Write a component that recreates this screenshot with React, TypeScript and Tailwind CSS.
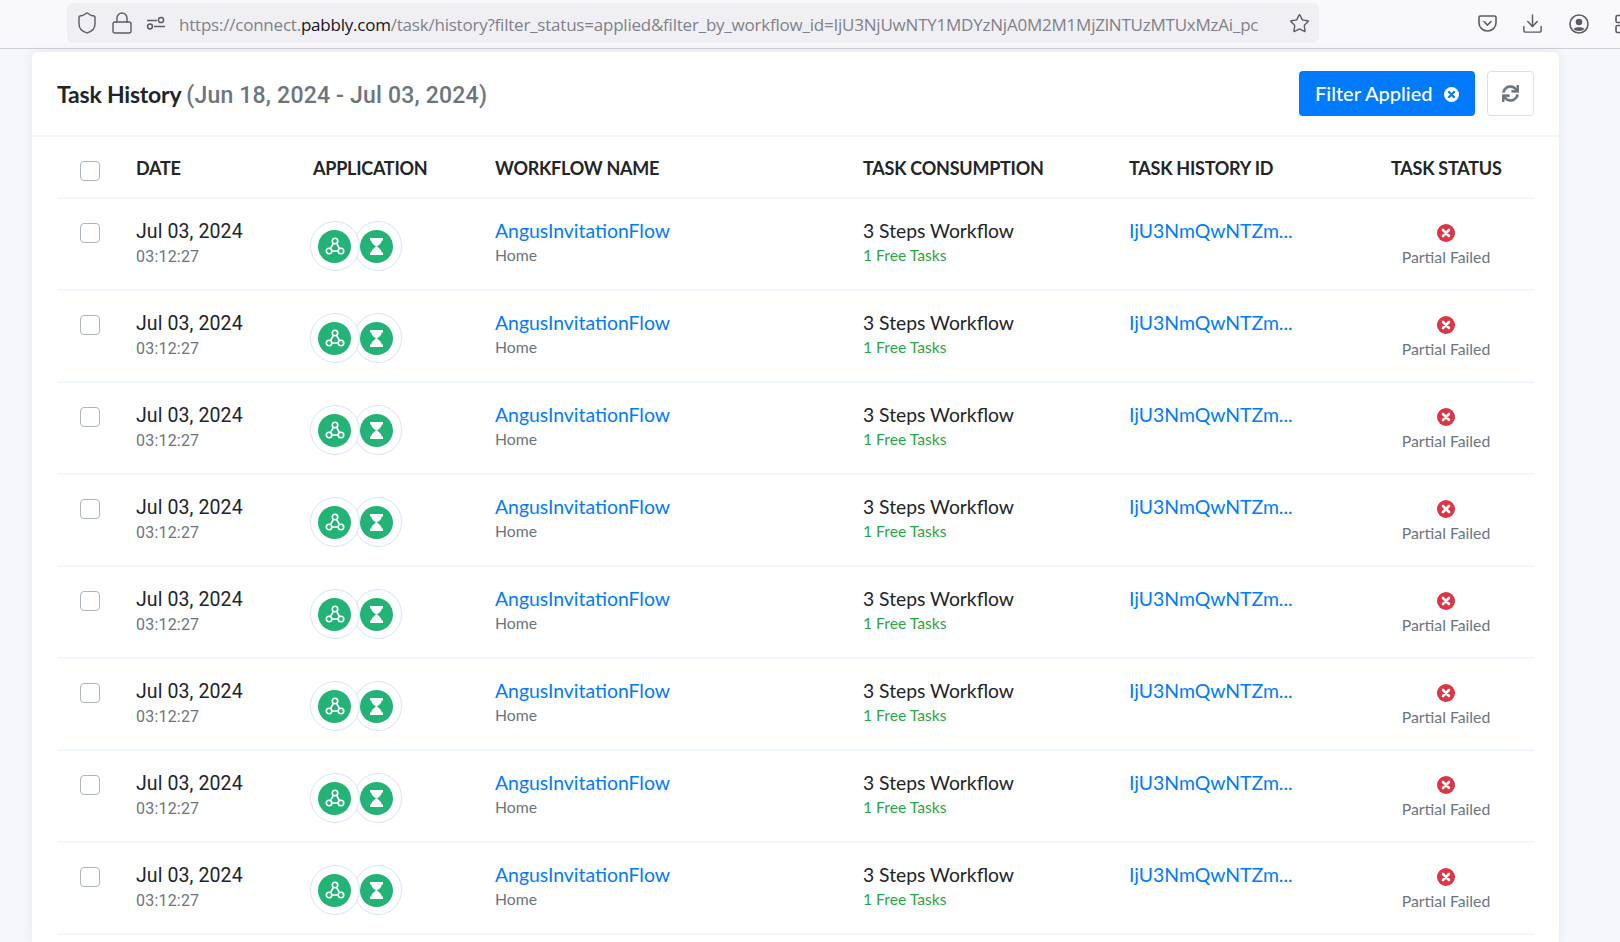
import { Shield, Lock, Star, Download } from "lucide-react";
import { FaSync } from "react-icons/fa";

const COLS = "grid grid-cols-[78px_174px_185px_368px_266px_262px_143px]";

function Check({ className = "" }: { className?: string }) {
  return <span className={`block w-[20px] h-[20px] ml-[22px] rounded-[4px] border border-[#adb5bd] bg-white ${className}`} />;
}

function Apps() {
  return (
    <div className="flex mt-[22px] h-[50px]">
      <div className="relative z-10 w-[50px] h-[50px] rounded-full border border-[#d6e2fb] bg-white flex items-center justify-center">
        <span className="w-[33px] h-[33px] mr-[1px] rounded-full bg-[#23b377] flex items-center justify-center">
          <svg width="22" height="22" viewBox="0 0 24 24" fill="none" stroke="white" strokeWidth="1.8" strokeLinecap="round" strokeLinejoin="round">
            <circle cx="12" cy="6.5" r="3" />
            <circle cx="5.5" cy="17.5" r="3" />
            <circle cx="18.5" cy="17.5" r="3" />
            <path d="M10.4 9L7 14.9" />
            <path d="M13.6 9L17 14.9" />
            <path d="M8.5 17.5H15.5" />
          </svg>
        </span>
      </div>
      <div className="w-[48px] h-[50px] -ml-[6px] rounded-full border border-[#d6e2fb] flex items-center justify-center">
        <span className="w-[33px] h-[33px] mr-[3px] rounded-full bg-[#23b377] flex items-center justify-center">
          <svg width="15" height="17" viewBox="0 0 15 17" fill="white">
            <path d="M1 0H14V2.5H12.8C12.8 5 10 7 8 8.5H7C5 7 2.2 5 2.2 2.5H1Z" />
            <path d="M1 17H14V14.5H12.8C12.8 12 10 10 8 8.5H7C5 10 2.2 12 2.2 14.5H1Z" />
          </svg>
        </span>
      </div>
    </div>
  );
}

function Row() {
  return (
    <div className={`${COLS} h-[92px] border-b-2 border-[#f0f6fd]`}>
      <div className="pt-[24px]"><Check /></div>
      <div className="pt-[20px] font-['Roboto',sans-serif]">
        <div className="text-[19.5px] leading-[25px] text-[#212529] tracking-[0.1px]">Jul 03, 2024</div>
        <div className="text-[16px] leading-[26px] text-[#6c757d] tracking-[0.2px]">03:12:27</div>
      </div>
      <Apps />
      <div className="pt-[20px]">
        <div className="text-[19.4px] leading-[24px] text-[#007bff] whitespace-nowrap">AngusInvitationFlow</div>
        <div className="text-[15.8px] leading-[24px] text-[#6c757d]">Home</div>
      </div>
      <div className="pt-[20px]">
        <div className="text-[19.3px] leading-[24px] text-[#212529] whitespace-nowrap">3 Steps Workflow</div>
        <div className="text-[15.7px] leading-[24px] text-[#28a745]">1 Free Tasks</div>
      </div>
      <div className="pt-[20px]">
        <div className="text-[19.4px] leading-[24px] text-[#007bff] whitespace-nowrap">IjU3NmQwNTZm...</div>
      </div>
      <div className="w-[110px] flex flex-col items-center pt-[25px]">
        <svg width="18" height="18" viewBox="0 0 18 18">
          <circle cx="9" cy="9" r="9" fill="#dc3545" />
          <path d="M6 6L12 12M12 6L6 12" stroke="white" strokeWidth="2.6" strokeLinecap="round" />
        </svg>
        <div className="mt-[2px] text-[15.8px] leading-[26px] text-[#6c757d] whitespace-nowrap">Partial Failed</div>
      </div>
    </div>
  );
}

export default function App() {
  return (
    <div className="h-[942px] overflow-hidden bg-[#f4f7fb] font-['Lato',sans-serif] flex flex-col">
      <div className="h-[49px] shrink-0 bg-[#f9f9fb] border-b border-[#cfcfd8] flex items-start overflow-hidden">
        <div className="ml-[67px] mt-[3px] w-[1252px] shrink-0 h-[40px] rounded-[6px] bg-[#f0f0f4] flex items-center text-[#5b5b66]">
          <Shield size={24} strokeWidth={1.4} className="ml-[8px] shrink-0" />
          <Lock size={24} strokeWidth={1.4} className="ml-[11px] shrink-0" />
          <svg width="20" height="14" viewBox="0 0 20 14" fill="none" stroke="currentColor" strokeWidth="1.5" className="ml-[12px] shrink-0">
            <path d="M1 4.5H11M8 10.5H19" />
            <circle cx="15" cy="4" r="2.6" />
            <circle cx="4" cy="10.5" r="2.4" />
          </svg>
          <div className="ml-[13px] w-[1082px] shrink-0 pt-[3px] whitespace-nowrap text-[17px] tracking-[-0.22px] text-[#80808a] font-['Open_Sans',sans-serif]">
            https://connect.<span className="text-[#15141a]">pabbly.com</span>/task/history?filter_status=applied&amp;filter_by_workflow_id=IjU3NjUwNTY1MDYzNjA0M2M1MjZlNTUzMTUxMzAi_pc
          </div>
          <Star size={21} strokeWidth={1.6} className="ml-[28px] shrink-0" />
        </div>
        <div className="flex items-center text-[#5b5b66] mt-[12px] shrink-0 ml-[159px]">
          <svg width="19" height="17" viewBox="0 0 19 17" fill="none" stroke="currentColor" strokeWidth="1.6" className="shrink-0">
            <path d="M2.5 1H16.5A1.5 1.5 0 0 1 18 2.5V8A8.5 8 0 0 1 1 8V2.5A1.5 1.5 0 0 1 2.5 1Z" />
            <path d="M6 6.5L9.5 10L13 6.5" strokeLinecap="round" />
          </svg>
          <Download size={23} strokeWidth={1.5} className="ml-[24px] shrink-0" />
          <svg width="20" height="20" viewBox="0 0 20 20" fill="currentColor" className="ml-[25px] shrink-0">
            <circle cx="10" cy="10" r="9" fill="none" stroke="currentColor" strokeWidth="1.6" />
            <circle cx="10" cy="8" r="3.3" />
            <path d="M4.5 15C6 12.6 14 12.6 15.5 15C13 17.6 7 17.6 4.5 15Z" />
          </svg>
          <svg width="20" height="20" viewBox="0 0 20 20" fill="none" stroke="currentColor" strokeWidth="1.6" className="ml-[26px] shrink-0">
            <rect x="1" y="1.5" width="7" height="7" rx="1.5" />
            <rect x="1" y="11.5" width="7" height="7" rx="1.5" />
            <rect x="11" y="11.5" width="7" height="7" rx="1.5" />
          </svg>
        </div>
      </div>

      <div className="mt-[3px] ml-[32px] w-[1527px] flex-1 rounded-t-[6px] bg-white shadow-[0_0_12px_rgba(30,60,110,0.07)]">
        <div className="h-[85px] pl-[25px] pr-[25px] flex items-center justify-between border-b-2 border-[#f0f6fd]">
          <h1 className="pt-[3px] text-[23px] font-bold text-[#212529] whitespace-nowrap tracking-[-0.2px]">
            Task History{" "}
            <span className="text-[#6c757d] font-['Roboto',sans-serif] font-medium tracking-[0.2px]">(Jun 18, 2024 - Jul 03, 2024)</span>
          </h1>
          <div className="flex gap-[12px]">
            <div className="h-[45px] w-[176px] rounded-[4px] bg-[#007bff] text-white text-[20px] font-medium flex items-center pl-[16px] whitespace-nowrap">
              <span className="-mt-[2px]">Filter Applied</span>
              <svg width="15" height="15" viewBox="0 0 15 15" className="ml-[11px] mt-[1px]">
                <circle cx="7.5" cy="7.5" r="7.5" fill="white" />
                <path d="M5 5L10 10M10 5L5 10" stroke="#007bff" strokeWidth="2.2" strokeLinecap="round" />
              </svg>
            </div>
            <div className="h-[45px] w-[47px] rounded-[4px] border border-[#dee2e6] flex items-center justify-center text-[#6c757d]">
              <FaSync size={17} stroke="currentColor" strokeWidth={10} />
            </div>
          </div>
        </div>
        <div className="ml-[26px] w-[1476px]">
          <div className={`${COLS} h-[62px] border-b-2 border-[#f0f6fd] text-[18px] font-bold text-[#212529] tracking-[-0.25px]`}>
            <div className="pt-[24px]"><Check /></div>
            <div className="pt-[18px]">DATE</div>
            <div className="pt-[18px] pl-[3px]">APPLICATION</div>
            <div className="pt-[18px]">WORKFLOW NAME</div>
            <div className="pt-[18px]">TASK CONSUMPTION</div>
            <div className="pt-[18px]">TASK HISTORY ID</div>
            <div className="pt-[18px] whitespace-nowrap">TASK STATUS</div>
          </div>
          {Array.from({ length: 8 }, (_, i) => <Row key={i} />)}
        </div>
      </div>
    </div>
  );
}
